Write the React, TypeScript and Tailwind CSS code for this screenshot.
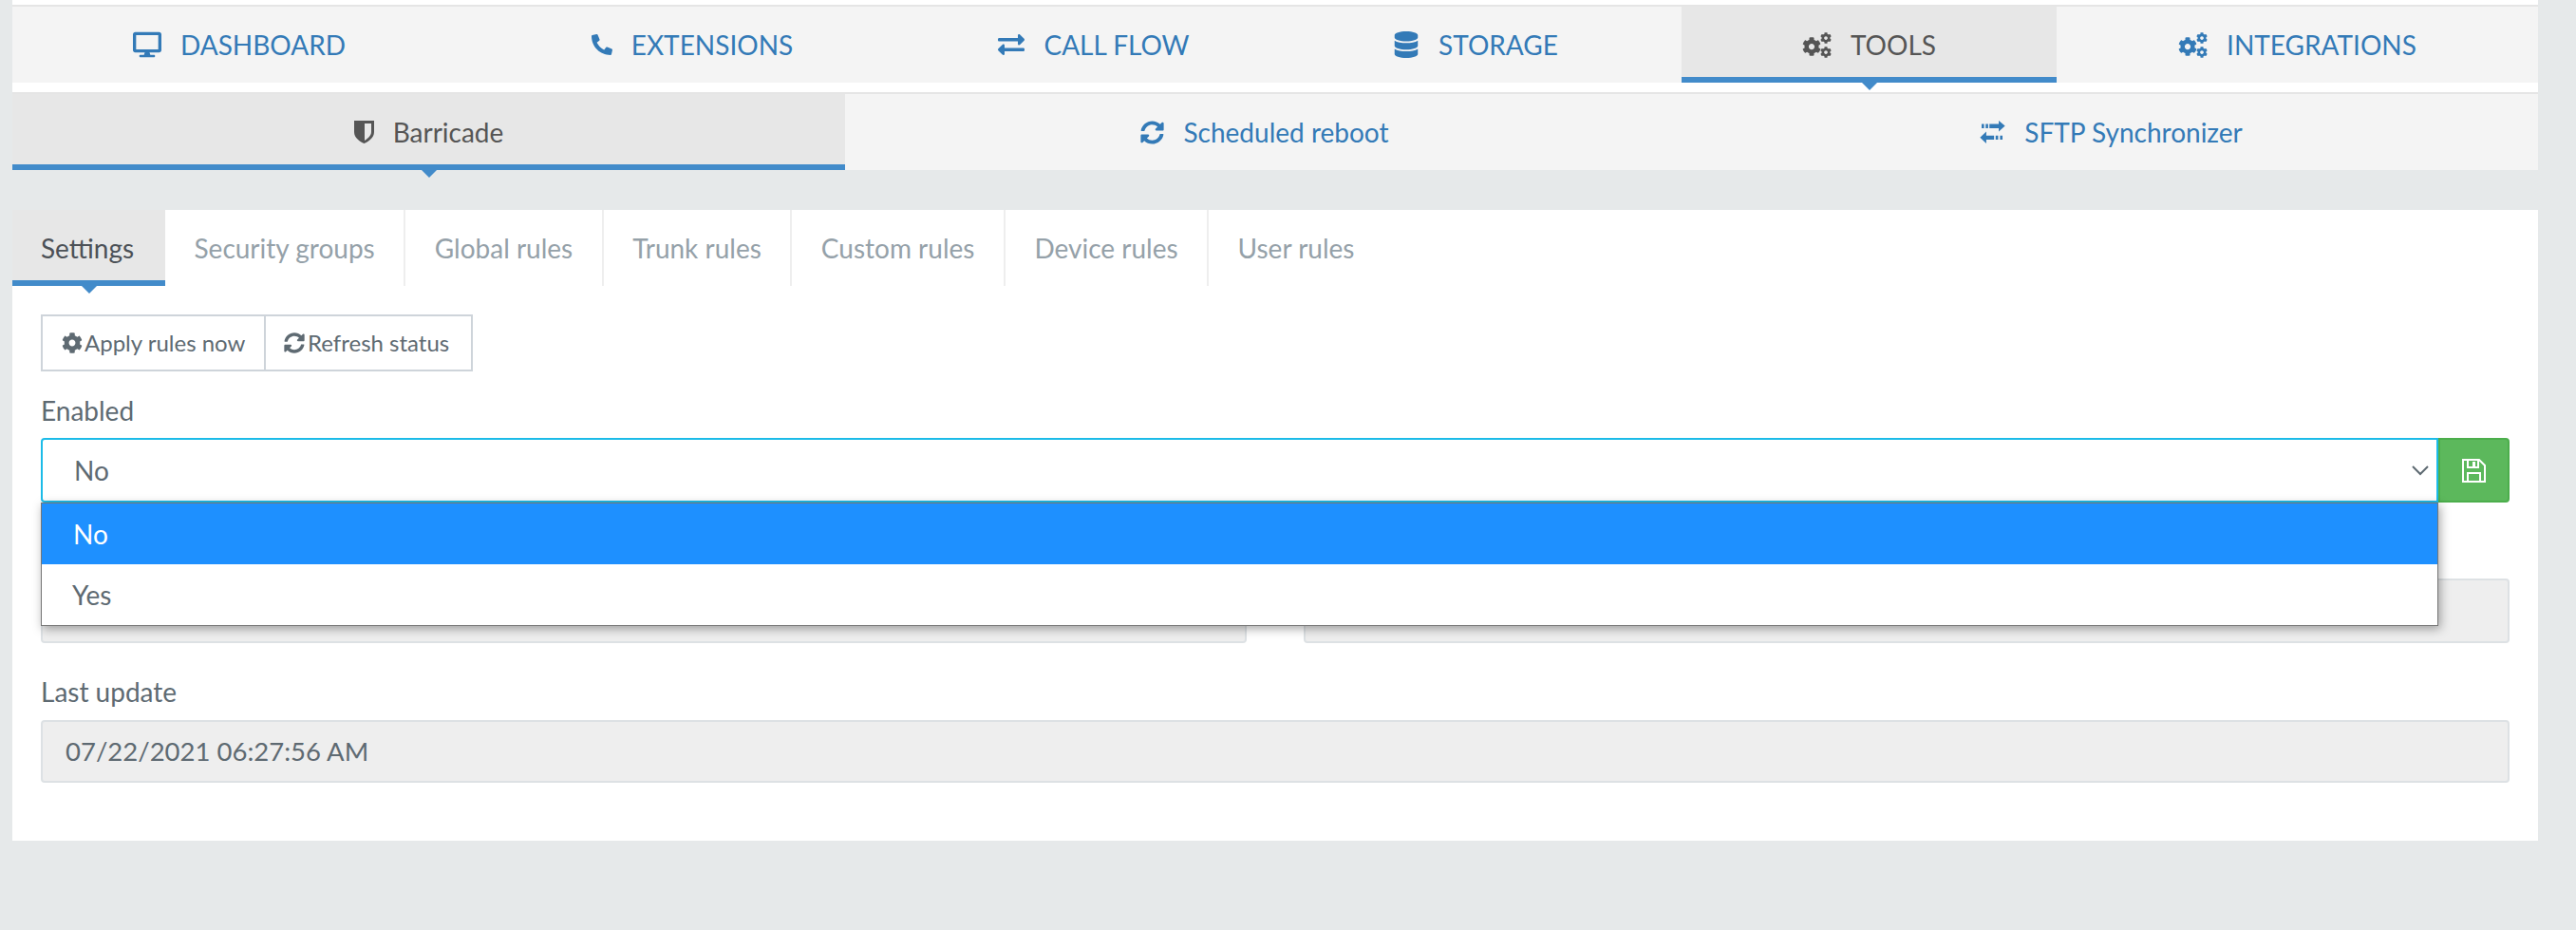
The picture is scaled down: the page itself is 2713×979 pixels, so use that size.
import React from "react";
import { FaDesktop, FaPhone, FaExchangeAlt, FaDatabase, FaCog, FaSyncAlt } from "react-icons/fa";

const CogsIcon = () => (
  <span className="flex items-center">
    <FaCog size={20} className="mt-[3px]" />
    <span className="flex flex-col gap-[3px] -ml-[1px]">
      <FaCog size={12} />
      <FaCog size={12} />
    </span>
  </span>
);

const navItems = [
  { label: "DASHBOARD", icon: <FaDesktop size={30} /> },
  { label: "EXTENSIONS", icon: <FaPhone size={22} className="-scale-x-100" /> },
  { label: "CALL FLOW", icon: <FaExchangeAlt size={28} /> },
  { label: "STORAGE", icon: <FaDatabase size={28} /> },
  { label: "TOOLS", icon: <CogsIcon />, active: true },
  { label: "INTEGRATIONS", icon: <CogsIcon /> },
];

const ruleTabs = ["Security groups", "Global rules", "Trunk rules", "Custom rules", "Device rules", "User rules"];

const ShieldIcon = () => (
  <svg width="21" height="24" viewBox="0 0 21 24" fill="currentColor">
    <path d="M0 0h21v12c0 6-6 10-10.500 12C6 22 0 18 0 12V0zM11 3v18c3-2 7-5 7-9V3h-7z" fillRule="evenodd" />
  </svg>
);

const SftpIcon = () => (
  <svg width="27" height="24" viewBox="0 0 80 73" fill="currentColor">
    <path d="M60 0l20 17-20 18V24H30V11h30z" />
    <path d="M5 11h8v13H5zM18 11h8v13h-8z" />
    <path d="M20 35v13h25v13H20v12L0 54z" />
    <path d="M50 48h8v13h-8zM64 48h8v13h-8z" />
  </svg>
);

const SaveIcon = () => (
  <svg width="25" height="25" viewBox="0 0 25 25" fill="none" stroke="currentColor" strokeWidth="2">
    <path d="M1 1h17l6 6v17H1z" />
    <path d="M6 1v8h11V1M6 24v-9h13v9" />
    <path d="M11 3h3v5h-3z" fill="currentColor" stroke="none" />
  </svg>
);

export default function App() {
  return (
    <div className="min-h-[979px] bg-[#e6e9ea] pl-[13px] pr-[40px] font-['Lato','Open_Sans',sans-serif] text-[#5e6a72] text-[28px]">
      {/* top nav */}
      <div className="bg-white pt-[5px] pb-[10px]">
        <div className="grid grid-cols-[478px_476px_370px_434px_395px_507px] h-[82px] border-t-2 border-[#e5e5e5] bg-[#f4f4f4]">
          {navItems.map((item) => (
            <div
              key={item.label}
              className={
                item.active
                  ? "relative flex items-center justify-center gap-[20px] pt-[6px] bg-[#e7e7e7] border-b-[6px] border-[#428bca] text-[#555555]"
                  : "flex items-center justify-center gap-[20px] text-[#337ab7]"
              }
            >
              {item.icon}
              <span className="leading-none">{item.label}</span>
              {item.active && (
                <span className="absolute left-1/2 -bottom-[14px] -ml-[8px] border-x-[8px] border-t-[8px] border-x-transparent border-t-[#428bca]" />
              )}
            </div>
          ))}
        </div>
      </div>

      {/* sub nav */}
      <div className="grid grid-cols-[877px_884px_899px] h-[82px] border-t-2 border-[#e5e5e5] bg-[#f4f4f4]">
        <div className="relative flex items-center justify-center gap-[20px] pt-[6px] bg-[#e7e7e7] border-b-[6px] border-[#428bca] text-[#555555]">
          <ShieldIcon />
          <span>Barricade</span>
          <span className="absolute left-1/2 -bottom-[14px] -ml-[8px] border-x-[8px] border-t-[8px] border-x-transparent border-t-[#428bca]" />
        </div>
        <div className="flex items-center justify-center gap-[20px] text-[#337ab7]">
          <FaSyncAlt size={25} />
          <span>Scheduled reboot</span>
        </div>
        <div className="flex items-center justify-center gap-[20px] text-[#337ab7]">
          <SftpIcon />
          <span>SFTP Synchronizer</span>
        </div>
      </div>

      {/* panel */}
      <div className="mt-[42px] bg-white h-[664px]">
        <div className="flex h-[80px]">
          <div className="relative flex items-center w-[161px] pl-[30px] pt-[6px] bg-[#e7e7e7] border-b-[6px] border-[#428bca] text-[#4c5157]">
            Settings
            <span className="absolute left-[73px] -bottom-[14px] border-x-[8px] border-t-[8px] border-x-transparent border-t-[#428bca]" />
          </div>
          {ruleTabs.map((tab, i) => (
            <div
              key={tab}
              className={
                i < ruleTabs.length - 1
                  ? "flex items-center px-[30.5px] border-r-2 border-[#eeeeee] text-[#95a1a9]"
                  : "flex items-center px-[30.5px] text-[#95a1a9]"
              }
            >
              {tab}
            </div>
          ))}
        </div>

        <div className="px-[30px] pt-[30px]">
          <div className="flex w-fit h-[60px] border-2 border-[#ced4da] text-[24px]">
            <div className="flex items-center gap-[2px] w-[235px] pl-[20px] border-r-2 border-[#ced4da]">
              <FaCog size={22} />
              Apply rules now
            </div>
            <div className="flex items-center gap-[3px] w-[216px] pl-[19px]">
              <FaSyncAlt size={22} />
              Refresh status
            </div>
          </div>

          <label className="block mt-[26px] leading-[30px]">Enabled</label>

          {/* select with open list */}
          <div className="relative mt-[14px] flex h-[68px]">
            <div className="flex-1 flex items-center justify-between pl-[33px] pr-[7px] border-2 border-[#1cbbe8] rounded-l-[4px] bg-white">
              <span>No</span>
              <svg width="20" height="12" viewBox="0 0 20 12" fill="none" stroke="#5e6a72" strokeWidth="2">
                <path d="M2 2l8 8 8-8" />
              </svg>
            </div>
            <div className="flex items-center justify-center w-[75px] bg-[#5cb85c] border-2 border-[#4cae4c] rounded-r-[4px] text-white">
              <SaveIcon />
            </div>
            <div className="absolute z-10 left-0 right-[75px] top-[68px] border border-[#767676] bg-white shadow-[2px_3px_10px_rgba(0,0,0,0.35)]">
              <div className="flex items-center h-[64px] pl-[33px] bg-[#1e90ff] text-white">No</div>
              <div className="flex items-center h-[64px] pl-[32px]">Yes</div>
            </div>
          </div>

          {/* two read-only fields, their labels sit under the open list */}
          <div className="mt-[80px] grid grid-cols-2 gap-[60px]">
            <div className="h-[68px] border-2 border-[#dde1e4] rounded-[4px] bg-[#eeeeee]" />
            <div className="h-[68px] border-2 border-[#dde1e4] rounded-[4px] bg-[#eeeeee]" />
          </div>

          <label className="block mt-[36px] leading-[30px]">Last update</label>
          <div className="mt-[15px] flex items-center h-[66px] pl-[24px] border-2 border-[#dde1e4] rounded-[4px] bg-[#eeeeee] text-[27.5px]">
            07/22/2021 06:27:56 AM
          </div>
        </div>
      </div>
    </div>
  );
}
